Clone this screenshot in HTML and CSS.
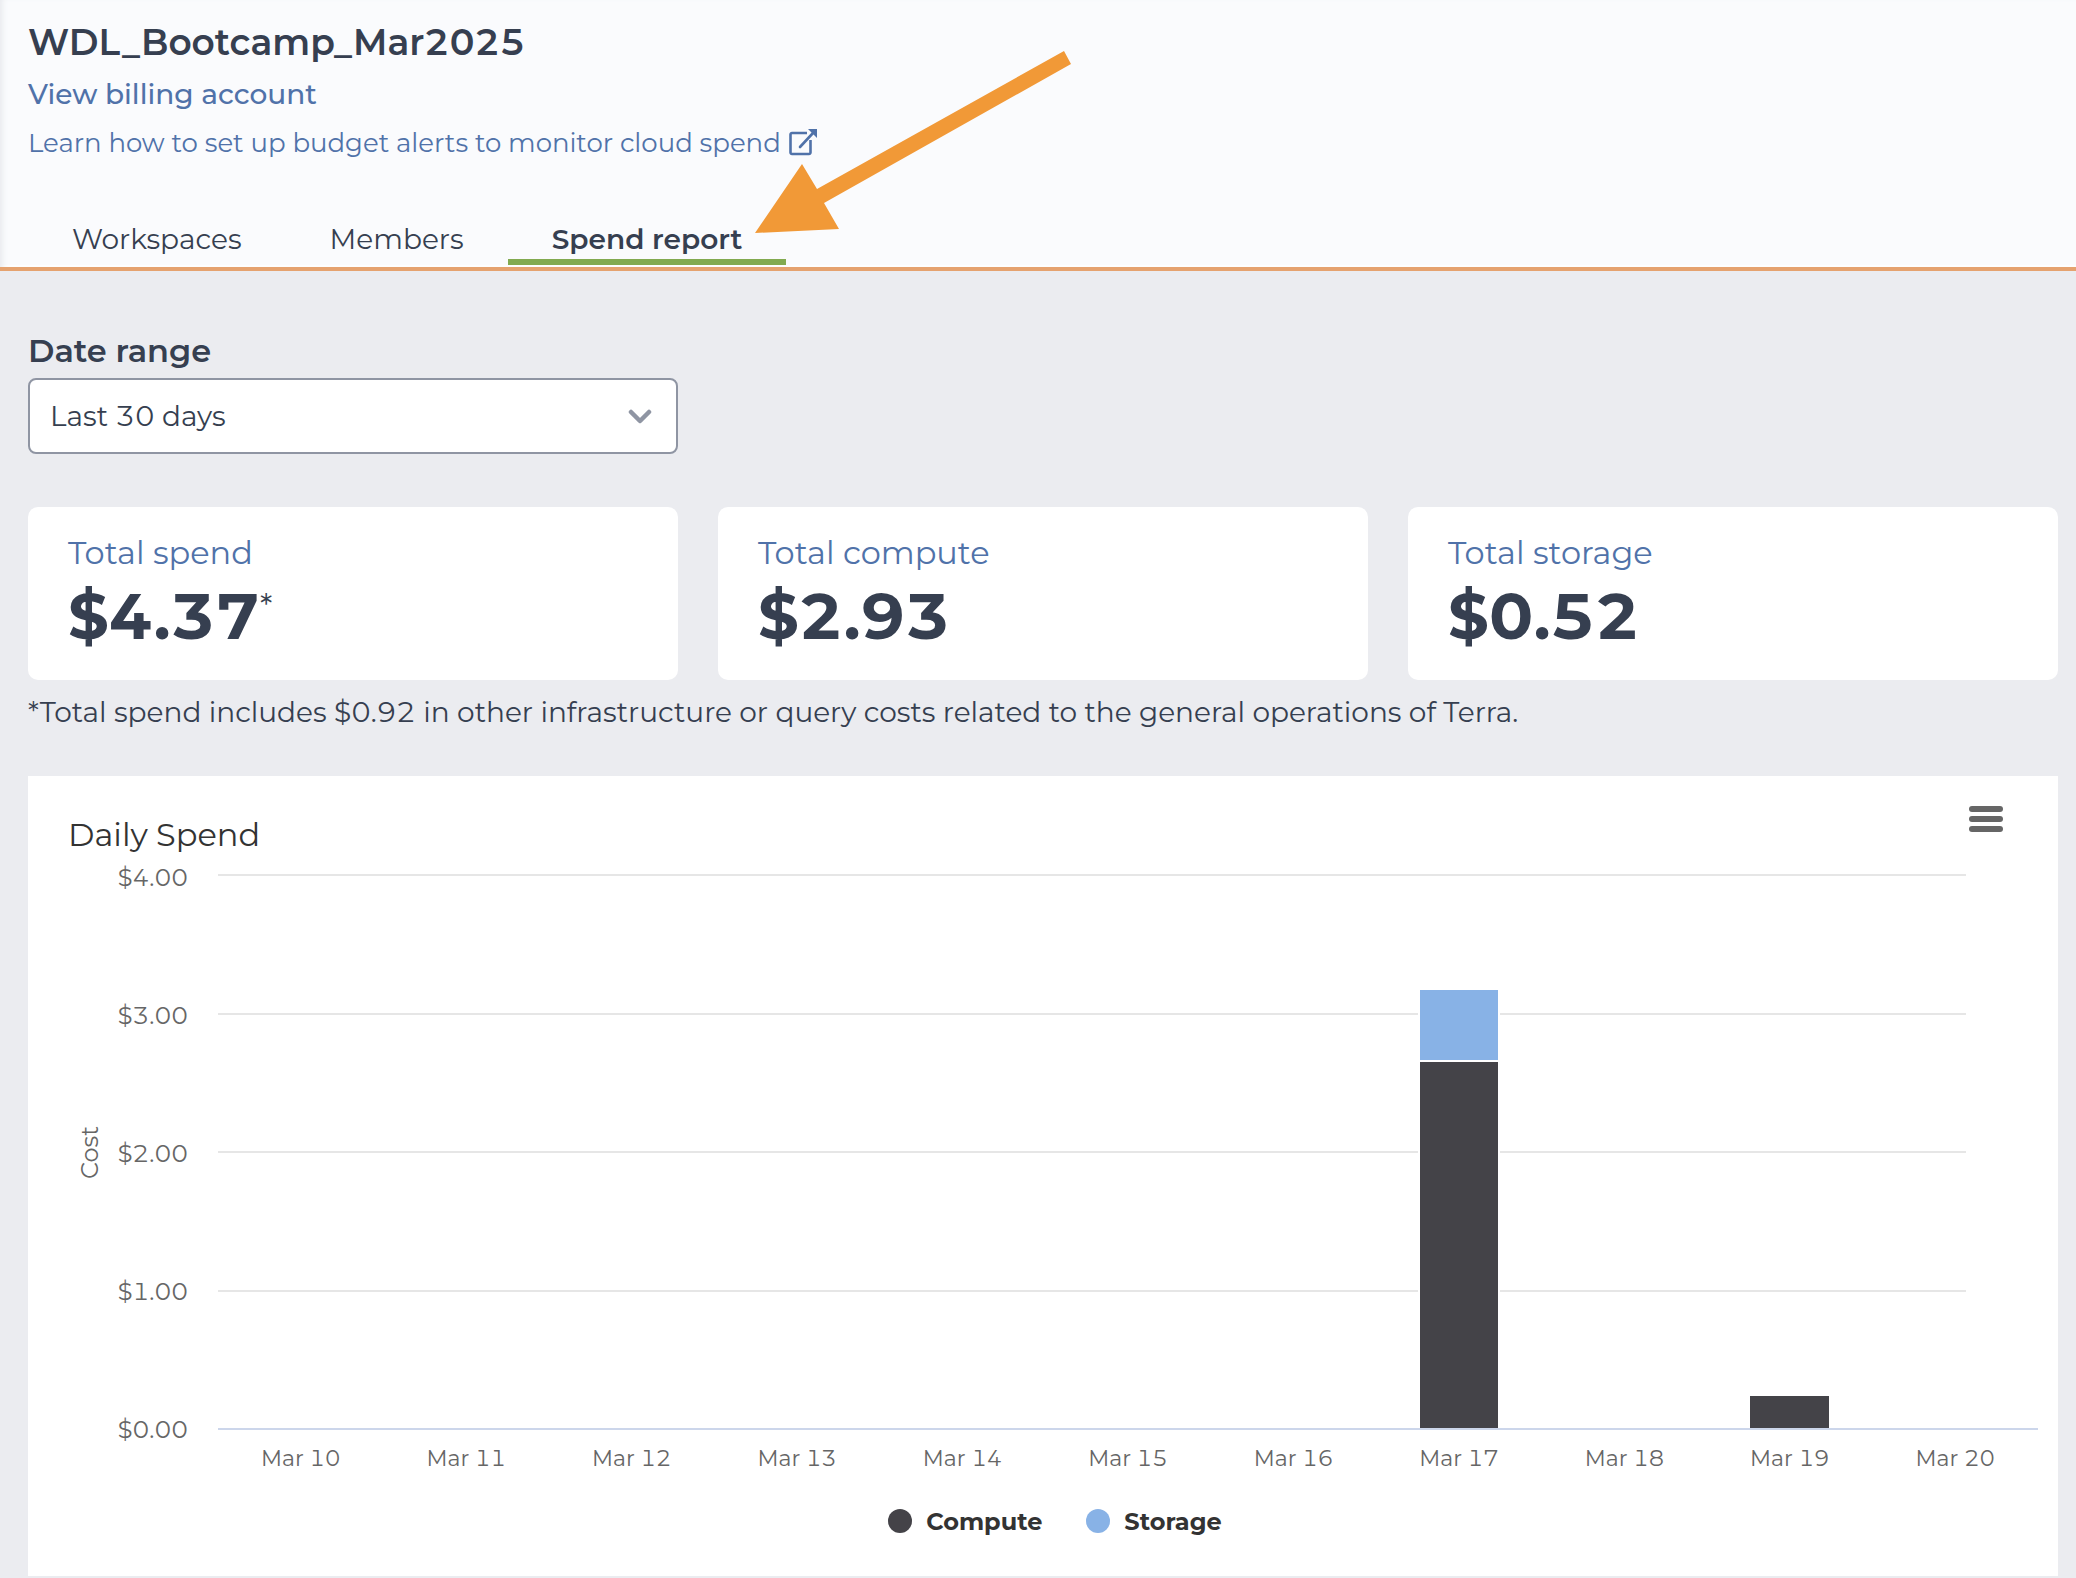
FILE: index.html
```html
<!DOCTYPE html>
<html lang="en">
<head>
<meta charset="utf-8">
<meta name="viewport" content="width=device-width, initial-scale=1">
<title>WDL_Bootcamp_Mar2025 - Spend report</title>
<link rel="stylesheet" href="styles.css">
</head>
<body>
<header class="project-header">
  <h1 class="project-name">WDL_Bootcamp_Mar2025</h1>
  <a class="link link-account" href="#billing">View billing account</a>
  <a class="link link-alerts" href="#alerts">Learn how to set up budget alerts to monitor cloud spend
    <svg class="icon-popout" viewBox="0 0 28 28" aria-hidden="true"><path d="M18 4H3a1.500 1.500 0 0 0-1.500 1.500v18A1.500 1.500 0 0 0 3 25h17a1.500 1.500 0 0 0 1.500-1.500V11" fill="none" stroke="currentColor" stroke-width="2.600"/><path d="M11 18L24 4" fill="none" stroke="currentColor" stroke-width="2.600" stroke-linecap="round"/><path d="M19 0h9v9z" fill="currentColor"/></svg>
  </a>
  <nav class="tabs" aria-label="Billing project">
    <a class="tab" href="#workspaces">Workspaces</a>
    <a class="tab" href="#members">Members</a>
    <a class="tab tab-active" href="#spend" aria-current="page">Spend report</a>
  </nav>
  <svg class="arrow" viewBox="0 0 316 182" aria-hidden="true"><path d="M0 182L47 113L62 138L309 0L316 13L69 152L84 178Z" fill="#f19937"/></svg>
</header>

<main class="report">
  <div class="columns">
    <div class="field">
      <label class="field-label" for="range">Date range</label>
      <div class="select-box">
        <select class="select" id="range">
          <option>Last 30 days</option>
          <option>Last 7 days</option>
          <option>Last 90 days</option>
        </select>
        <svg class="chevron" viewBox="0 0 24 16" aria-hidden="true"><path d="M3 3l9 9 9-9" fill="none" stroke="currentColor" stroke-width="4.500" stroke-linecap="round" stroke-linejoin="round"/></svg>
      </div>
    </div>
  </div>

  <div class="columns totals">
    <section class="card">
      <h2 class="card-label">Total spend</h2>
      <div class="card-value">$4.37<sup class="mark">*</sup></div>
    </section>
    <section class="card">
      <h2 class="card-label">Total compute</h2>
      <div class="card-value">$2.93</div>
    </section>
    <section class="card">
      <h2 class="card-label">Total storage</h2>
      <div class="card-value">$0.52</div>
    </section>
  </div>
  <p class="note">*Total spend includes $0.92 in other infrastructure or query costs related to the general operations of Terra.</p>

  <section class="chart">
    <div class="chart-head">
      <h2 class="chart-title">Daily Spend</h2>
      <button class="menu" type="button" aria-label="View chart menu"><span class="menu-bar"></span><span class="menu-bar"></span><span class="menu-bar"></span></button>
    </div>
    <div class="chart-body">
      <div class="axis-title"><span>Cost</span></div>
      <div class="y-axis"><span>$4.00</span><span>$3.00</span><span>$2.00</span><span>$1.00</span><span>$0.00</span></div>
      <div class="plot">
        <div class="gridlines"><i></i><i></i><i></i><i></i><i class="base"></i></div>
        <div class="bars">
          <div class="day"></div><div class="day"></div><div class="day"></div><div class="day"></div><div class="day"></div><div class="day"></div><div class="day"></div>
          <div class="day"><div class="bar storage" style="height:13%"></div><div class="bar compute" style="height:66.4%"></div></div>
          <div class="day"></div>
          <div class="day"><div class="bar compute" style="height:6.1%"></div></div>
          <div class="day"></div>
        </div>
      </div>
      <div class="x-axis"><span>Mar 10</span><span>Mar 11</span><span>Mar 12</span><span>Mar 13</span><span>Mar 14</span><span>Mar 15</span><span>Mar 16</span><span>Mar 17</span><span>Mar 18</span><span>Mar 19</span><span>Mar 20</span></div>
    </div>
    <div class="legend">
      <button class="legend-item" type="button"><span class="dot compute"></span>Compute</button>
      <button class="legend-item" type="button"><span class="dot storage"></span>Storage</button>
    </div>
  </section>
</main>
</body>
</html>
```
FILE: styles.css
```css
* { box-sizing: border-box; }

body {
  margin: 0;
  background: #ebecf0;
  color: #363f50;
  font-family: Montserrat, Inter, "Liberation Sans", sans-serif;
  font-size: 28px;
  font-variant-numeric: tabular-nums;
  line-height: 40px;
}

h1, h2, p { margin: 0; font-weight: 400; }

.project-header {
  position: relative;
  display: flex;
  flex-direction: column;
  align-items: flex-start;
  padding: 18px 28px 0;
  background: #fafbfd;
  border-bottom: 4px solid #e5a26f;
  box-shadow: inset 6px 0 6px -4px #e6e8ec, inset 0 -2px #fff;
}

.project-name { font-size: 36px; line-height: 48px; font-weight: 600; }

.link { color: #5072a9; text-decoration: none; }
.link-account { margin-top: 8px; font-weight: 500; }
.link-alerts { display: flex; align-items: center; gap: 8px; margin-top: 9px; font-size: 26px; }
.icon-popout { width: 28px; height: 28px; }

.tabs { display: flex; margin-top: 58px; padding-bottom: 2px; }
.tab {
  padding: 0 44px 2px;
  border-bottom: 6px solid transparent;
  color: inherit;
  line-height: 36px;
  text-decoration: none;
}
.tab-active { border-color: #82aa50; font-weight: 600; }

.arrow { position: absolute; left: 755px; top: 51px; width: 316px; height: 182px; }

.report { padding: 60px 18px 2px 28px; }

.columns { display: grid; grid-template-columns: repeat(3, 1fr); gap: 40px; }

.field-label { display: block; font-size: 32px; font-weight: 600; margin-bottom: 7px; }
.select-box { position: relative; display: flex; }
.select {
  width: 100%;
  height: 76px;
  padding: 0 60px 0 20px;
  border: 2px solid #8f95a3;
  border-radius: 8px;
  background: #fff;
  color: inherit;
  font: inherit;
  font-variant-numeric: tabular-nums;
  appearance: none;
}
.chevron { position: absolute; right: 26px; top: 31px; width: 24px; height: 16px; color: #8f95a3; pointer-events: none; }

.totals { margin-top: 53px; }
.card { padding: 26px 40px 24px; border-radius: 10px; background: #fff; }
.card-label { margin-bottom: 3px; color: #5072a9; font-size: 32px; }
.card-value { font-size: 64px; line-height: 80px; font-weight: 700; }
.mark { font-size: 32px; font-weight: 400; line-height: 0; }
.note { margin-top: 12px; }

.chart { margin-top: 44px; padding: 30px 20px 38px 40px; background: #fff; }
.chart-head { display: flex; justify-content: space-between; color: #333; }
.chart-title { margin-top: 9px; font-size: 32px; }
.menu {
  display: flex;
  flex-direction: column;
  gap: 4px;
  width: 34px;
  height: 26px;
  margin-right: 35px;
  padding: 0;
  border: 0;
  background: none;
}
.menu-bar { height: 6px; border-radius: 3px; background: #666; }

.chart-body {
  display: grid;
  grid-template-columns: 44px 76px 1fr;
  grid-template-rows: 556px auto;
  margin-top: 19px;
  color: #666;
  font-size: 24px;
  line-height: 28px;
}
.axis-title { display: flex; align-items: center; justify-content: center; }
.axis-title span { writing-mode: vertical-rl; rotate: 180deg; }
.y-axis { display: flex; flex-direction: column; justify-content: space-between; align-items: flex-end; margin: -10px 0 -14px; }

.plot { display: grid; margin-left: 30px; }
.gridlines, .bars { grid-area: 1 / 1; }
.gridlines { display: flex; flex-direction: column; justify-content: space-between; }
.gridlines i { height: 2px; margin-right: 72px; background: #e6e6e6; }
.gridlines .base { margin-right: 0; background: #ccd6eb; }
.bars { display: grid; grid-template-columns: repeat(11, 1fr); margin-bottom: 2px; }
.day { display: flex; flex-direction: column; justify-content: flex-end; align-items: center; }
.bar { width: 50%; border: 2px solid #fff; border-bottom: 0; }
.compute { background: #444348; }
.storage { background: #88b2e6; }

.x-axis { grid-column: 3; display: grid; grid-template-columns: repeat(11, 1fr); margin: 15px 0 0 30px; font-size: 22px; text-align: center; }

.legend { display: flex; justify-content: center; gap: 44px; margin-top: 33px; padding-left: 4px; }
.legend-item {
  display: flex;
  align-items: center;
  gap: 14px;
  padding: 0;
  border: 0;
  background: none;
  color: #333;
  font: inherit;
  font-size: 24px;
  line-height: 32px;
  font-weight: 700;
}
.dot { width: 24px; height: 24px; margin-bottom: 2px; border-radius: 50%; }
```
